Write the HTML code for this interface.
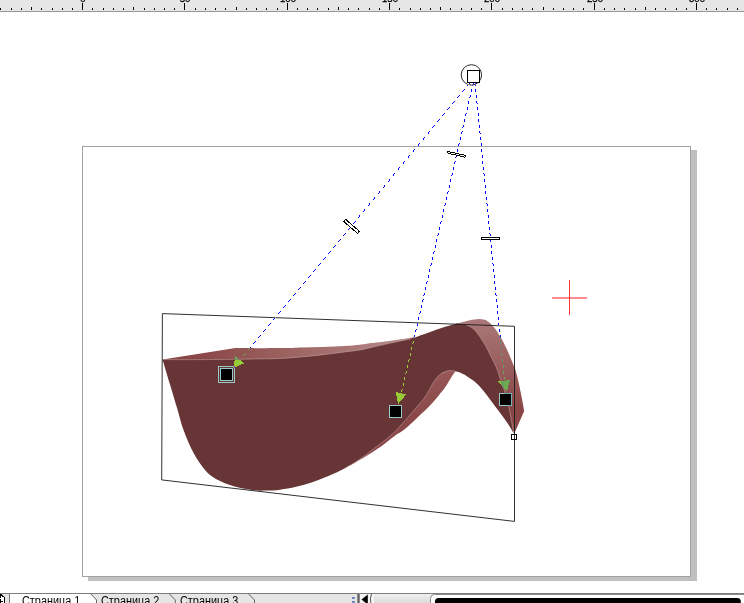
<!DOCTYPE html>
<html lang="ru">
<head>
<meta charset="utf-8">
<title>CorelDRAW - Страница 1</title>
<style>
html,body{margin:0;padding:0;background:#fff;}
body{width:744px;height:603px;overflow:hidden;position:relative;font-family:"Liberation Sans",sans-serif;}
svg{position:absolute;left:0;top:0;display:block;}
.bar{position:absolute;left:0;top:593px;width:744px;height:10px;background:#e6e6e6;border-top:1px solid #7d7d7d;box-sizing:border-box;overflow:hidden;}
.tab{position:absolute;top:0.6px;height:12px;font-size:12px;line-height:12px;color:#000;white-space:nowrap;transform-origin:0 0;transform:scaleX(0.906);}
.ruler text{font-family:"Liberation Sans",sans-serif;font-size:9.5px;fill:#000;stroke:#000;stroke-width:0.3px;}
</style>
</head>
<body>
<svg width="744" height="603" viewBox="0 0 744 603">
  <defs>
    <linearGradient id="gTop" gradientUnits="userSpaceOnUse" x1="165" y1="0" x2="420" y2="0">
      <stop offset="0" stop-color="#8a4545"/>
      <stop offset="0.14" stop-color="#8b4747"/>
      <stop offset="0.53" stop-color="#9e6765"/>
      <stop offset="0.84" stop-color="#b08080"/>
      <stop offset="1" stop-color="#b88c8c"/>
    </linearGradient>
    <linearGradient id="gRight" gradientUnits="userSpaceOnUse" x1="0" y1="319" x2="0" y2="412">
      <stop offset="0" stop-color="#aa7978"/>
      <stop offset="0.3" stop-color="#a06868"/>
      <stop offset="0.95" stop-color="#8b4747"/>
      <stop offset="1" stop-color="#8a4646"/>
    </linearGradient>
    <linearGradient id="gLow" gradientUnits="userSpaceOnUse" x1="0" y1="370" x2="0" y2="460">
      <stop offset="0" stop-color="#995959"/>
      <stop offset="0.07" stop-color="#965656"/>
      <stop offset="0.25" stop-color="#915050"/>
      <stop offset="0.55" stop-color="#8b4747"/>
      <stop offset="1" stop-color="#8a4646"/>
    </linearGradient>
  </defs>

  <!-- ruler -->
  <g class="ruler">
    <rect x="0" y="0" width="744" height="11" fill="#e6e6e6"/>
    <rect x="0" y="11" width="744" height="1" fill="#9a9a9a"/>
    <g fill="#000" shape-rendering="crispEdges"><rect x="0" y="8" width="1" height="2"/><rect x="11" y="8" width="1" height="2"/><rect x="21" y="8" width="1" height="2"/><rect x="31" y="7" width="1" height="3"/><rect x="41" y="8" width="1" height="2"/><rect x="52" y="8" width="1" height="2"/><rect x="62" y="8" width="1" height="2"/><rect x="72" y="8" width="1" height="2"/><rect x="82" y="3" width="1" height="7"/><rect x="92" y="8" width="1" height="2"/><rect x="103" y="8" width="1" height="2"/><rect x="113" y="8" width="1" height="2"/><rect x="123" y="8" width="1" height="2"/><rect x="133" y="7" width="1" height="3"/><rect x="144" y="8" width="1" height="2"/><rect x="154" y="8" width="1" height="2"/><rect x="164" y="8" width="1" height="2"/><rect x="174" y="8" width="1" height="2"/><rect x="184" y="3" width="1" height="7"/><rect x="195" y="8" width="1" height="2"/><rect x="205" y="8" width="1" height="2"/><rect x="215" y="8" width="1" height="2"/><rect x="225" y="8" width="1" height="2"/><rect x="236" y="7" width="1" height="3"/><rect x="246" y="8" width="1" height="2"/><rect x="256" y="8" width="1" height="2"/><rect x="266" y="8" width="1" height="2"/><rect x="277" y="8" width="1" height="2"/><rect x="287" y="3" width="1" height="7"/><rect x="297" y="8" width="1" height="2"/><rect x="307" y="8" width="1" height="2"/><rect x="317" y="8" width="1" height="2"/><rect x="328" y="8" width="1" height="2"/><rect x="338" y="7" width="1" height="3"/><rect x="348" y="8" width="1" height="2"/><rect x="358" y="8" width="1" height="2"/><rect x="369" y="8" width="1" height="2"/><rect x="379" y="8" width="1" height="2"/><rect x="389" y="3" width="1" height="7"/><rect x="399" y="8" width="1" height="2"/><rect x="410" y="8" width="1" height="2"/><rect x="420" y="8" width="1" height="2"/><rect x="430" y="8" width="1" height="2"/><rect x="440" y="7" width="1" height="3"/><rect x="450" y="8" width="1" height="2"/><rect x="461" y="8" width="1" height="2"/><rect x="471" y="8" width="1" height="2"/><rect x="481" y="8" width="1" height="2"/><rect x="491" y="3" width="1" height="7"/><rect x="502" y="8" width="1" height="2"/><rect x="512" y="8" width="1" height="2"/><rect x="522" y="8" width="1" height="2"/><rect x="532" y="8" width="1" height="2"/><rect x="543" y="7" width="1" height="3"/><rect x="553" y="8" width="1" height="2"/><rect x="563" y="8" width="1" height="2"/><rect x="573" y="8" width="1" height="2"/><rect x="583" y="8" width="1" height="2"/><rect x="594" y="3" width="1" height="7"/><rect x="604" y="8" width="1" height="2"/><rect x="614" y="8" width="1" height="2"/><rect x="624" y="8" width="1" height="2"/><rect x="635" y="8" width="1" height="2"/><rect x="645" y="7" width="1" height="3"/><rect x="655" y="8" width="1" height="2"/><rect x="665" y="8" width="1" height="2"/><rect x="676" y="8" width="1" height="2"/><rect x="686" y="8" width="1" height="2"/><rect x="696" y="3" width="1" height="7"/><rect x="706" y="8" width="1" height="2"/><rect x="716" y="8" width="1" height="2"/><rect x="727" y="8" width="1" height="2"/><rect x="737" y="8" width="1" height="2"/></g>
    <text x="83" y="1.7" text-anchor="middle">0</text><text x="185" y="1.7" text-anchor="middle">50</text><text x="288" y="1.7" text-anchor="middle">100</text><text x="390" y="1.7" text-anchor="middle">150</text><text x="492" y="1.7" text-anchor="middle">200</text><text x="595" y="1.7" text-anchor="middle">250</text><text x="697" y="1.7" text-anchor="middle">300</text>
  </g>

  <!-- page + shadow -->
  <g shape-rendering="crispEdges">
    <rect x="691" y="150" width="6" height="431" fill="#c0c0c0"/>
    <rect x="88" y="577" width="609" height="4" fill="#c0c0c0"/>
    <rect x="82.5" y="146.5" width="608" height="430" fill="#fff" stroke="#a0a0a0" stroke-width="1"/>
  </g>

  <!-- extruded shape -->
  <path d="M162.7,359.6 L235.5,348.1 C242.9,348.1 269.0,348.2 280.0,348.1 C291.0,348.0 294.3,347.6 301.5,347.4 C308.7,347.2 315.8,347.2 323.0,347.0 C330.2,346.8 338.3,346.5 344.5,346.1 C350.7,345.7 355.5,345.3 360.0,344.8 C364.5,344.3 366.0,343.8 371.5,343.1 C377.0,342.4 386.6,341.3 393.0,340.4 C399.4,339.5 406.5,338.3 410.2,337.7 C413.9,337.1 414.2,336.8 415.0,336.6 L415,345 L300,362 L162.7,362 Z" fill="url(#gTop)"/>
  <path d="M455.0,324.2 C456.5,323.8 461.4,322.4 463.8,321.8 C466.2,321.2 467.3,320.8 469.1,320.4 C470.9,320.0 472.7,319.7 474.5,319.5 C476.3,319.3 478.0,318.8 480.0,319.0 C482.0,319.2 484.4,319.3 486.6,320.6 C488.8,321.9 491.1,324.1 493.3,326.6 C495.5,329.2 497.7,332.2 499.9,335.9 C502.1,339.5 504.4,344.1 506.5,348.5 C508.6,352.9 510.9,358.8 512.4,362.4 C513.9,366.0 514.5,366.7 515.5,370.0 C516.5,373.3 517.6,377.8 518.6,382.4 C519.6,387.0 520.8,392.6 521.7,397.4 C522.6,402.2 523.8,408.8 524.2,411.1 L514.2,433.8 L505,410 L495,370 L480,340 L460,330 Z" fill="url(#gRight)"/>
  <path d="M455.5,371.3 C454.8,372.2 452.9,374.9 451.5,377.0 C450.1,379.1 448.7,381.8 447.3,384.0 C445.9,386.2 444.4,388.4 443.2,390.0 C442.0,391.6 442.0,391.4 439.9,393.9 C437.8,396.4 434.2,401.1 430.5,405.0 C426.8,408.9 421.8,413.4 417.5,417.5 C413.2,421.6 408.4,426.3 404.6,429.3 C400.8,432.3 398.2,433.4 394.9,435.7 C391.6,438.0 388.3,440.9 385.0,443.4 C381.7,445.8 379.2,447.7 375.0,450.4 C370.8,453.1 364.2,457.3 360.0,459.8 C355.8,462.3 351.7,464.6 350.0,465.5 L350,460 L400,420 L430,380 L450,368 Z" fill="url(#gLow)"/>
  <path d="M162.7,359.6 C168.9,359.6 187.6,359.7 200.0,359.6 C212.4,359.6 227.0,359.4 237.0,359.3 C247.0,359.2 252.8,359.0 260.0,358.9 C267.2,358.8 273.1,358.8 280.0,358.5 C286.9,358.2 294.3,357.5 301.5,356.9 C308.7,356.3 315.8,355.5 323.0,354.7 C330.2,353.9 338.3,352.8 344.5,352.0 C350.7,351.2 355.5,350.7 360.0,349.9 C364.5,349.1 366.0,348.6 371.5,347.4 C377.0,346.2 386.6,344.0 393.0,342.6 C399.4,341.2 405.4,340.2 410.0,339.0 C414.6,337.8 417.2,336.6 420.8,335.3 C424.4,334.1 427.9,332.8 431.5,331.5 C435.1,330.2 438.7,328.9 442.3,327.7 C445.9,326.5 450.3,325.2 453.0,324.5 C455.7,323.8 456.6,323.6 458.4,323.5 C460.2,323.4 462.0,323.6 463.8,324.0 C465.6,324.4 467.3,325.1 469.1,326.1 C470.9,327.1 472.7,328.1 474.5,329.9 C476.3,331.7 478.1,334.2 479.9,336.8 C481.7,339.4 483.6,342.4 485.3,345.3 C487.0,348.2 488.1,350.7 490.0,354.5 C491.9,358.3 494.8,363.6 496.6,367.9 C498.4,372.1 499.2,375.9 500.6,380.0 C502.0,384.1 503.3,387.0 504.9,392.4 C506.4,397.8 508.4,405.4 509.9,412.3 C511.4,419.2 513.1,430.0 513.8,433.5 C512.9,432.1 510.5,427.7 508.6,424.8 C506.7,421.9 504.7,419.2 502.4,416.1 C500.1,413.0 497.4,409.4 494.9,406.1 C492.4,402.8 490.0,399.4 487.5,396.1 C485.0,392.8 482.2,389.1 479.8,386.5 C477.4,383.9 475.4,382.4 473.2,380.6 C471.0,378.8 468.7,377.2 466.5,375.9 C464.3,374.6 461.8,373.4 459.9,372.6 C458.0,371.8 457.0,371.6 455.3,371.3 C453.6,371.0 451.7,370.4 449.7,370.6 C447.7,370.8 445.1,371.6 443.1,372.6 C441.1,373.6 439.6,374.7 437.8,376.6 C436.0,378.5 433.9,381.6 432.5,383.9 C431.1,386.2 430.6,387.8 429.1,390.2 C427.7,392.6 426.5,395.1 423.8,398.6 C421.1,402.1 416.6,407.2 413.0,411.4 C409.4,415.6 406.1,419.6 402.3,423.8 C398.5,428.0 394.6,432.3 390.0,436.3 C385.4,440.3 380.0,444.0 375.0,447.8 C370.0,451.6 365.1,455.6 360.0,459.0 C354.9,462.4 349.8,465.7 344.5,468.5 C339.2,471.3 333.8,473.7 328.4,476.0 C323.0,478.3 317.7,480.5 312.3,482.3 C306.9,484.1 301.5,485.6 296.1,486.8 C290.7,488.0 284.9,489.1 280.0,489.7 C275.1,490.3 271.1,490.5 266.7,490.6 C262.3,490.7 258.8,490.9 253.5,490.2 C248.2,489.5 241.0,488.4 234.7,486.5 C228.4,484.6 220.9,481.7 215.9,478.9 C210.9,476.1 208.4,473.9 204.6,469.5 C200.8,465.1 196.8,459.2 193.3,452.6 C189.8,446.0 186.1,437.1 183.5,430.0 C180.9,422.9 179.2,415.3 177.6,409.7 C175.9,404.1 174.9,400.8 173.6,396.4 C172.3,392.0 170.9,387.6 169.6,383.2 C168.3,378.8 166.8,373.8 165.6,369.9 C164.4,366.0 163.2,361.3 162.7,359.6 Z" fill="#673535"/>
  <path d="M162.7,359.6 C168.9,359.6 187.6,359.7 200.0,359.6 C212.4,359.6 227.0,359.4 237.0,359.3 C247.0,359.2 252.8,359.0 260.0,358.9 C267.2,358.8 273.1,358.8 280.0,358.5 C286.9,358.2 294.3,357.5 301.5,356.9 C308.7,356.3 315.8,355.5 323.0,354.7 C330.2,353.9 338.3,352.8 344.5,352.0 C350.7,351.2 355.5,350.7 360.0,349.9 C364.5,349.1 366.0,348.6 371.5,347.4 C377.0,346.2 386.6,344.0 393.0,342.6 C399.4,341.2 407.2,339.6 410.0,339.0 M458.4,323.5 C459.3,323.6 462.0,323.6 463.8,324.0 C465.6,324.4 467.3,325.1 469.1,326.1 C470.9,327.1 472.7,328.1 474.5,329.9 C476.3,331.7 478.1,334.2 479.9,336.8 C481.7,339.4 483.6,342.4 485.3,345.3 C487.0,348.2 488.1,350.7 490.0,354.5 C491.9,358.3 494.8,363.6 496.6,367.9 C498.4,372.1 499.2,375.9 500.6,380.0 C502.0,384.1 503.3,387.0 504.9,392.4 C506.4,397.8 508.4,405.4 509.9,412.3 C511.4,419.2 513.1,430.0 513.8,433.5 M455.3,371.3 C454.4,371.2 451.7,370.4 449.7,370.6 C447.7,370.8 445.1,371.6 443.1,372.6 C441.1,373.6 439.6,374.7 437.8,376.6 C436.0,378.5 433.9,381.6 432.5,383.9 C431.1,386.2 430.6,387.8 429.1,390.2 C427.7,392.6 426.5,395.1 423.8,398.6 C421.1,402.1 416.6,407.2 413.0,411.4 C409.4,415.6 406.1,419.6 402.3,423.8 C398.5,428.0 394.6,432.3 390.0,436.3 C385.4,440.3 380.0,444.0 375.0,447.8 C370.0,451.6 365.1,455.6 360.0,459.0 C354.9,462.4 347.1,466.9 344.5,468.5" fill="none" stroke="#d0b4b4" stroke-opacity="0.6" stroke-width="0.8"/>

  <!-- bounding quad -->
  <polygon points="162.4,313.6 514.5,326.3 514.5,521.4 161.7,479.9" fill="none" stroke="#1a1a1a" stroke-width="0.9"/>
  

  <!-- vanishing point marker -->
  <circle cx="471.4" cy="74.9" r="10.2" fill="none" stroke="#2c2c2c" stroke-width="1"/>
  <rect x="467.5" y="70.5" width="12" height="12" fill="#fff" stroke="#000" stroke-width="1" shape-rendering="crispEdges"/>

  <!-- XOR-style dashed guide lines -->
  <g style="mix-blend-mode:difference" fill="#ffff00" stroke="none" shape-rendering="crispEdges"><rect x="469" y="83" width="1" height="1"/><rect x="468" y="84" width="1" height="1"/><rect x="467" y="85" width="1" height="1"/><rect x="464" y="89" width="1" height="1"/><rect x="463" y="90" width="1" height="1"/><rect x="462" y="91" width="1" height="1"/><rect x="459" y="95" width="1" height="1"/><rect x="458" y="96" width="1" height="1"/><rect x="457" y="97" width="1" height="1"/><rect x="454" y="101" width="1" height="1"/><rect x="453" y="102" width="1" height="1"/><rect x="452" y="103" width="1" height="1"/><rect x="449" y="107" width="1" height="1"/><rect x="448" y="108" width="1" height="1"/><rect x="447" y="109" width="1" height="1"/><rect x="444" y="113" width="1" height="1"/><rect x="443" y="114" width="1" height="1"/><rect x="442" y="115" width="1" height="1"/><rect x="439" y="119" width="1" height="1"/><rect x="438" y="120" width="1" height="1"/><rect x="437" y="121" width="1" height="1"/><rect x="434" y="125" width="1" height="1"/><rect x="433" y="126" width="1" height="1"/><rect x="432" y="127" width="1" height="1"/><rect x="429" y="131" width="1" height="1"/><rect x="428" y="132" width="1" height="2"/><rect x="424" y="137" width="1" height="1"/><rect x="423" y="138" width="1" height="2"/><rect x="419" y="143" width="1" height="1"/><rect x="418" y="144" width="1" height="2"/><rect x="414" y="149" width="1" height="1"/><rect x="413" y="150" width="1" height="2"/><rect x="409" y="155" width="1" height="1"/><rect x="408" y="156" width="1" height="2"/><rect x="404" y="161" width="1" height="1"/><rect x="403" y="162" width="1" height="2"/><rect x="399" y="167" width="1" height="1"/><rect x="398" y="168" width="1" height="2"/><rect x="394" y="173" width="1" height="1"/><rect x="393" y="174" width="1" height="2"/><rect x="389" y="179" width="1" height="2"/><rect x="388" y="181" width="1" height="1"/><rect x="384" y="185" width="1" height="2"/><rect x="383" y="187" width="1" height="1"/><rect x="379" y="191" width="1" height="2"/><rect x="378" y="193" width="1" height="1"/><rect x="374" y="197" width="1" height="2"/><rect x="373" y="199" width="1" height="1"/><rect x="369" y="203" width="1" height="2"/><rect x="368" y="205" width="1" height="1"/><rect x="364" y="209" width="1" height="2"/><rect x="363" y="211" width="1" height="1"/><rect x="359" y="215" width="1" height="2"/><rect x="358" y="217" width="1" height="1"/><rect x="355" y="221" width="1" height="1"/><rect x="354" y="222" width="1" height="1"/><rect x="353" y="223" width="1" height="1"/><rect x="350" y="227" width="1" height="1"/><rect x="349" y="228" width="1" height="1"/><rect x="348" y="229" width="1" height="1"/><rect x="345" y="233" width="1" height="1"/><rect x="344" y="234" width="1" height="1"/><rect x="343" y="235" width="1" height="1"/><rect x="340" y="239" width="1" height="1"/><rect x="339" y="240" width="1" height="1"/><rect x="338" y="241" width="1" height="1"/><rect x="335" y="245" width="1" height="1"/><rect x="334" y="246" width="1" height="1"/><rect x="333" y="247" width="1" height="1"/><rect x="330" y="251" width="1" height="1"/><rect x="329" y="252" width="1" height="1"/><rect x="328" y="253" width="1" height="1"/><rect x="325" y="257" width="1" height="1"/><rect x="324" y="258" width="1" height="1"/><rect x="323" y="259" width="1" height="1"/><rect x="320" y="263" width="1" height="1"/><rect x="319" y="264" width="1" height="1"/><rect x="318" y="265" width="1" height="1"/><rect x="315" y="269" width="1" height="1"/><rect x="314" y="270" width="1" height="1"/><rect x="313" y="271" width="1" height="1"/><rect x="310" y="275" width="1" height="1"/><rect x="309" y="276" width="1" height="1"/><rect x="308" y="277" width="1" height="1"/><rect x="305" y="281" width="1" height="1"/><rect x="304" y="282" width="1" height="1"/><rect x="303" y="283" width="1" height="1"/><rect x="300" y="287" width="1" height="1"/><rect x="299" y="288" width="1" height="1"/><rect x="298" y="289" width="1" height="1"/><rect x="295" y="293" width="1" height="1"/><rect x="294" y="294" width="1" height="1"/><rect x="293" y="295" width="1" height="1"/><rect x="290" y="299" width="1" height="1"/><rect x="289" y="300" width="1" height="1"/><rect x="288" y="301" width="1" height="1"/><rect x="285" y="305" width="1" height="1"/><rect x="284" y="306" width="1" height="1"/><rect x="283" y="307" width="1" height="1"/><rect x="280" y="311" width="1" height="1"/><rect x="279" y="312" width="1" height="1"/><rect x="278" y="313" width="1" height="1"/><rect x="275" y="317" width="1" height="1"/><rect x="274" y="318" width="1" height="1"/><rect x="273" y="319" width="1" height="1"/><rect x="270" y="323" width="1" height="1"/><rect x="269" y="324" width="1" height="1"/><rect x="268" y="325" width="1" height="1"/><rect x="265" y="329" width="1" height="1"/><rect x="264" y="330" width="1" height="1"/><rect x="263" y="331" width="1" height="1"/><rect x="260" y="335" width="1" height="1"/><rect x="259" y="336" width="1" height="1"/><rect x="258" y="337" width="1" height="1"/><rect x="255" y="341" width="1" height="1"/><rect x="254" y="342" width="1" height="1"/><rect x="253" y="343" width="1" height="1"/><rect x="250" y="347" width="1" height="1"/><rect x="249" y="348" width="1" height="1"/><rect x="248" y="349" width="1" height="1"/><rect x="245" y="353" width="1" height="1"/><rect x="244" y="354" width="1" height="1"/><rect x="243" y="355" width="1" height="1"/><rect x="473" y="83" width="1" height="1"/><rect x="472" y="84" width="1" height="2"/><rect x="471" y="89" width="1" height="3"/><rect x="470" y="95" width="1" height="2"/><rect x="469" y="97" width="1" height="1"/><rect x="468" y="101" width="1" height="3"/><rect x="467" y="107" width="1" height="3"/><rect x="466" y="113" width="1" height="1"/><rect x="465" y="114" width="1" height="2"/><rect x="464" y="119" width="1" height="3"/><rect x="463" y="125" width="1" height="2"/><rect x="462" y="127" width="1" height="1"/><rect x="462" y="131" width="1" height="1"/><rect x="461" y="132" width="1" height="2"/><rect x="460" y="137" width="1" height="3"/><rect x="459" y="143" width="1" height="1"/><rect x="458" y="144" width="1" height="2"/><rect x="457" y="149" width="1" height="3"/><rect x="456" y="155" width="1" height="2"/><rect x="455" y="157" width="1" height="1"/><rect x="455" y="161" width="1" height="1"/><rect x="454" y="162" width="1" height="2"/><rect x="453" y="167" width="1" height="3"/><rect x="452" y="173" width="1" height="2"/><rect x="451" y="175" width="1" height="1"/><rect x="450" y="179" width="1" height="3"/><rect x="449" y="185" width="1" height="3"/><rect x="448" y="191" width="1" height="1"/><rect x="447" y="192" width="1" height="2"/><rect x="446" y="197" width="1" height="3"/><rect x="445" y="203" width="1" height="2"/><rect x="444" y="205" width="1" height="1"/><rect x="443" y="209" width="1" height="3"/><rect x="442" y="215" width="1" height="3"/><rect x="441" y="221" width="1" height="1"/><rect x="440" y="222" width="1" height="2"/><rect x="439" y="227" width="1" height="3"/><rect x="438" y="233" width="1" height="2"/><rect x="437" y="235" width="1" height="1"/><rect x="436" y="239" width="1" height="3"/><rect x="435" y="245" width="1" height="3"/><rect x="434" y="251" width="1" height="1"/><rect x="433" y="252" width="1" height="2"/><rect x="432" y="257" width="1" height="3"/><rect x="431" y="263" width="1" height="2"/><rect x="430" y="265" width="1" height="1"/><rect x="429" y="269" width="1" height="3"/><rect x="428" y="275" width="1" height="3"/><rect x="427" y="281" width="1" height="1"/><rect x="426" y="282" width="1" height="2"/><rect x="425" y="287" width="1" height="3"/><rect x="424" y="293" width="1" height="2"/><rect x="423" y="295" width="1" height="1"/><rect x="423" y="299" width="1" height="1"/><rect x="422" y="300" width="1" height="2"/><rect x="421" y="305" width="1" height="3"/><rect x="420" y="311" width="1" height="2"/><rect x="419" y="313" width="1" height="1"/><rect x="418" y="317" width="1" height="3"/><rect x="417" y="323" width="1" height="3"/><rect x="416" y="329" width="1" height="1"/><rect x="415" y="330" width="1" height="2"/><rect x="414" y="335" width="1" height="3"/><rect x="413" y="341" width="1" height="2"/><rect x="412" y="343" width="1" height="1"/><rect x="411" y="347" width="1" height="3"/><rect x="410" y="353" width="1" height="3"/><rect x="409" y="359" width="1" height="1"/><rect x="408" y="360" width="1" height="2"/><rect x="407" y="365" width="1" height="3"/><rect x="406" y="371" width="1" height="2"/><rect x="405" y="373" width="1" height="1"/><rect x="404" y="377" width="1" height="3"/><rect x="403" y="383" width="1" height="3"/><rect x="402" y="389" width="1" height="1"/><rect x="401" y="390" width="1" height="2"/><rect x="475" y="83" width="1" height="3"/><rect x="475" y="89" width="1" height="3"/><rect x="476" y="95" width="1" height="3"/><rect x="476" y="101" width="1" height="2"/><rect x="477" y="103" width="1" height="1"/><rect x="477" y="107" width="1" height="3"/><rect x="478" y="113" width="1" height="3"/><rect x="478" y="119" width="1" height="3"/><rect x="479" y="125" width="1" height="3"/><rect x="479" y="131" width="1" height="2"/><rect x="480" y="133" width="1" height="1"/><rect x="480" y="137" width="1" height="3"/><rect x="481" y="143" width="1" height="3"/><rect x="481" y="149" width="1" height="3"/><rect x="482" y="155" width="1" height="3"/><rect x="482" y="161" width="1" height="3"/><rect x="483" y="167" width="1" height="3"/><rect x="483" y="173" width="1" height="1"/><rect x="484" y="174" width="1" height="2"/><rect x="484" y="179" width="1" height="3"/><rect x="485" y="185" width="1" height="3"/><rect x="485" y="191" width="1" height="3"/><rect x="486" y="197" width="1" height="3"/><rect x="486" y="203" width="1" height="1"/><rect x="487" y="204" width="1" height="2"/><rect x="487" y="209" width="1" height="3"/><rect x="488" y="215" width="1" height="3"/><rect x="488" y="221" width="1" height="3"/><rect x="489" y="227" width="1" height="3"/><rect x="489" y="233" width="1" height="1"/><rect x="490" y="234" width="1" height="2"/><rect x="490" y="239" width="1" height="3"/><rect x="491" y="245" width="1" height="3"/><rect x="491" y="251" width="1" height="3"/><rect x="492" y="257" width="1" height="3"/><rect x="492" y="263" width="1" height="1"/><rect x="493" y="264" width="1" height="2"/><rect x="493" y="269" width="1" height="3"/><rect x="494" y="275" width="1" height="3"/><rect x="494" y="281" width="1" height="3"/><rect x="495" y="287" width="1" height="3"/><rect x="495" y="293" width="1" height="2"/><rect x="496" y="295" width="1" height="1"/><rect x="496" y="299" width="1" height="3"/><rect x="497" y="305" width="1" height="3"/><rect x="497" y="311" width="1" height="3"/><rect x="498" y="317" width="1" height="3"/><rect x="498" y="323" width="1" height="2"/><rect x="499" y="325" width="1" height="1"/><rect x="499" y="329" width="1" height="3"/><rect x="500" y="335" width="1" height="3"/><rect x="500" y="341" width="1" height="3"/><rect x="501" y="347" width="1" height="3"/><rect x="501" y="353" width="1" height="2"/><rect x="502" y="355" width="1" height="1"/><rect x="502" y="359" width="1" height="3"/><rect x="503" y="365" width="1" height="3"/><rect x="503" y="371" width="1" height="3"/><rect x="504" y="377" width="1" height="3"/></g>
  <g style="mix-blend-mode:difference" fill="#ffff00" stroke="none" shape-rendering="crispEdges">
    <polygon points="233.2,368.2 235.5,356.4 244.2,363.3"/>
    <polygon points="398.2,404 395.7,392 406.1,394.5"/>
    <polygon points="506.6,391.6 498.1,381.2 510,380.1"/>
  </g>

  <!-- sliders -->
  <g fill="#fff" stroke="#000" stroke-width="1" shape-rendering="crispEdges">
    <rect x="-9" y="-1.4" width="18" height="2.8" transform="translate(351.6,226.4) rotate(40.9)"/>
    <rect x="-9" y="-1" width="18" height="2" transform="translate(456.5,154.4) rotate(12.8)"/>
    <rect x="481.5" y="237.5" width="18" height="2" shape-rendering="crispEdges"/>
  </g>

  <!-- handles -->
  <g style="mix-blend-mode:difference" fill="none" stroke="#ffffff" stroke-width="1" shape-rendering="crispEdges">
    <rect x="218.5" y="366.5" width="16" height="16"/>
    <rect x="220.5" y="368.5" width="12" height="12"/>
    <rect x="389.5" y="405.5" width="12" height="12"/>
    <rect x="499.5" y="393.5" width="12" height="12"/>
  </g>
  <g fill="#000" shape-rendering="crispEdges">
    <rect x="221" y="369" width="11" height="11"/>
    <rect x="390" y="406" width="11" height="11"/>
    <rect x="500" y="394" width="11" height="11"/>
  </g>

  <!-- node at tip -->
  <rect x="511.5" y="434.5" width="5" height="5" fill="none" stroke="#000" stroke-width="1" shape-rendering="crispEdges"/>

  <!-- red cross cursor -->
  <rect x="569" y="280" width="1" height="35" fill="#fb3434"/>
  <rect x="552" y="297" width="35" height="2" fill="#ff8c8c"/>
  <rect x="569" y="297" width="1" height="2" fill="#f53030"/>
</svg>

<div class="bar">
  <svg width="744" height="10" viewBox="0 594 744 10" style="top:0">
    <defs><linearGradient id="gTrack" x1="0" y1="0" x2="0" y2="1"><stop offset="0" stop-color="#efefef"/><stop offset="1" stop-color="#d9d9d9"/></linearGradient></defs>
    <!-- active tab -->
    <polygon points="10,593 90.5,593 96.5,600 96.5,604 10,604" fill="#fff"/>
    <rect x="9" y="593" width="1" height="11" fill="#7d7d7d"/>
    <g fill="none" stroke="#555" stroke-width="0.9">
      <polyline points="90.3,593.4 96.5,600 96.5,604"/>
      <polyline points="169,593.4 175.3,600 175.3,604"/>
      <polyline points="248,593.4 254.5,600 254.5,604"/>
    </g>
    <!-- add page icon -->
    <g fill="#fff" shape-rendering="crispEdges"><rect x="1" y="596" width="1" height="1"/><rect x="1" y="597" width="1" height="1"/><rect x="2" y="597" width="1" height="1"/><rect x="3" y="597" width="1" height="1"/><rect x="0" y="598" width="1" height="1"/><rect x="1" y="598" width="1" height="1"/><rect x="2" y="598" width="1" height="1"/><rect x="3" y="598" width="1" height="1"/><rect x="1" y="599" width="1" height="1"/><rect x="2" y="599" width="1" height="1"/><rect x="3" y="599" width="1" height="1"/><rect x="1" y="600" width="1" height="1"/><rect x="2" y="600" width="1" height="1"/><rect x="3" y="600" width="1" height="1"/><rect x="3" y="601" width="1" height="1"/><rect x="1" y="602" width="1" height="1"/><rect x="2" y="602" width="1" height="1"/><rect x="3" y="602" width="1" height="1"/><rect x="1" y="603" width="1" height="1"/><rect x="2" y="603" width="1" height="1"/><rect x="3" y="603" width="1" height="1"/></g>
    <g fill="#000" shape-rendering="crispEdges"><rect x="0" y="594" width="1" height="1"/><rect x="1" y="594" width="1" height="1"/><rect x="0" y="595" width="1" height="1"/><rect x="1" y="595" width="1" height="1"/><rect x="2" y="595" width="1" height="1"/><rect x="0" y="596" width="1" height="1"/><rect x="2" y="596" width="1" height="1"/><rect x="3" y="596" width="1" height="1"/><rect x="0" y="597" width="1" height="1"/><rect x="4" y="597" width="1" height="1"/><rect x="4" y="598" width="1" height="1"/><rect x="0" y="599" width="1" height="1"/><rect x="4" y="599" width="1" height="1"/><rect x="0" y="600" width="1" height="1"/><rect x="4" y="600" width="1" height="1"/><rect x="0" y="601" width="1" height="1"/><rect x="1" y="601" width="1" height="1"/><rect x="2" y="601" width="1" height="1"/><rect x="4" y="601" width="1" height="1"/><rect x="0" y="602" width="1" height="1"/><rect x="4" y="602" width="1" height="1"/><rect x="0" y="603" width="1" height="1"/><rect x="4" y="603" width="1" height="1"/></g>
    <!-- splitter dots -->
    <rect x="352" y="597.2" width="2.8" height="1.5" fill="#3a66bb"/>
    <rect x="352" y="601.2" width="2.8" height="1.5" fill="#3a66bb"/>
    <!-- scroll area -->
    <rect x="357" y="594" width="3" height="10" fill="#8a8a8a"/>
    <rect x="358" y="594" width="1" height="10" fill="#6a6a6a"/>
    <rect x="360" y="594" width="14" height="10" fill="#f6f6f6"/>
    <polygon points="361.5,599.5 367.8,594.5 367.8,604.5" fill="#000"/>
    <path d="M371.5,594 Q369.5,599 371,604" stroke="#555" stroke-width="1" fill="none"/>
    <rect x="374" y="594" width="57" height="10" fill="url(#gTrack)"/>
    <rect x="430.5" y="594.5" width="330" height="14" rx="4" ry="4" fill="#fff" stroke="#8c8c8c" stroke-width="1"/>
    <rect x="435" y="598" width="305.8" height="12" rx="3.5" ry="3.5" fill="#000"/>
  </svg>
  <div class="tab" style="left:22px">Страница 1</div>
  <div class="tab" style="left:101.4px">Страница 2</div>
  <div class="tab" style="left:180.2px">Страница 3</div>
</div>
</body>
</html>
